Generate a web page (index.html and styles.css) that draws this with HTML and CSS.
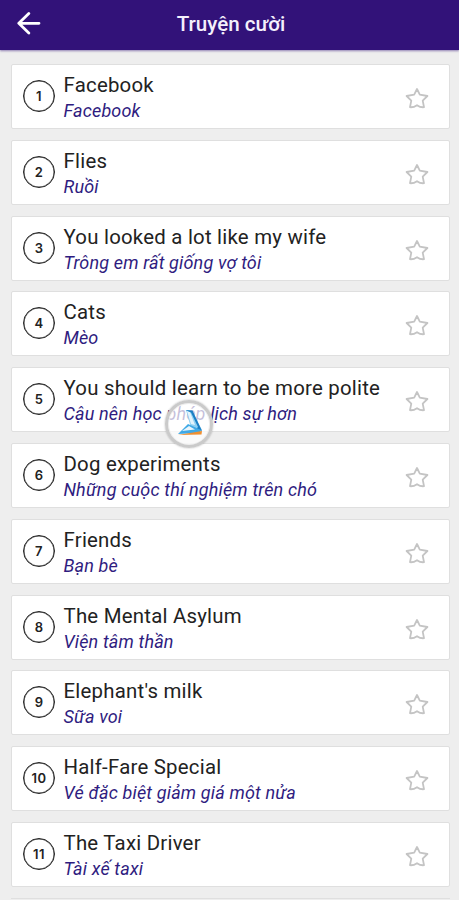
FILE: index.html
```html
<!DOCTYPE html>
<html lang="vi">
<head>
  <meta charset="UTF-8">
  <meta name="viewport" content="width=device-width, initial-scale=1.0">
  <title>Truyện cười</title>
  <link rel="stylesheet" href="styles.css">
</head>
<body>
  <svg class="symbols" width="0" height="0">
    <symbol id="star" viewBox="0 0 24 24">
      <path d="M12 3 L14.8 8.6 L22.4 10 L17.7 14.6 L19 21.2 Q15.5 21.6 12 19.2 Q8.5 21.6 5 21.2 L6.3 14.6 L1.6 10 L9.2 8.6 Z" fill="none" stroke="#c4c4c4" stroke-width="1.8" stroke-linejoin="round"/>
    </symbol>
  </svg>

  <header class="header">
    <a class="back" href="#" aria-label="Back">
      <svg width="24" height="24" viewBox="0 0 24 24" fill="none" stroke="#fff" stroke-width="2.8" stroke-linecap="round" stroke-linejoin="round">
        <path d="M22 12.3 H1.8 M11.8 2.5 L1.8 12.3 L11.8 22"/>
      </svg>
    </a>
    <h1>Truyện cười</h1>
  </header>

  <main class="list" id="list"></main>

  <div class="bubble">
    <svg width="48" height="48" viewBox="0 0 48 48">
      <path d="M21 10 L27 11 L37 30 L35 31 L26 28 Z" fill="#8fd0f2"/>
      <path d="M22 11 L25 12 L30 25 L26 24 Z" fill="#e4f4fc"/>
      <path d="M20.5 10 L27.5 10.5 L37 31 L31 29 L33 27 L26 12.5 Z" fill="#1b7fc4"/>
      <path d="M13 34 L23 24 L36 30 L35 33 Z" fill="#3fa9e6"/>
      <path d="M17 31 L24 26 L30 29.5 Z" fill="#e9f6fd"/>
      <path d="M13 35 L37 31 L36.5 34.5 Z" fill="#ef8f31"/>
    </svg>
  </div>

  <script>
    const stories = [
      ['Facebook', 'Facebook'],
      ['Flies', 'Ruồi'],
      ['You looked a lot like my wife', 'Trông em rất giống vợ tôi'],
      ['Cats', 'Mèo'],
      ['You should learn to be more polite', 'Cậu nên học phép lịch sự hơn'],
      ['Dog experiments', 'Những cuộc thí nghiệm trên chó'],
      ['Friends', 'Bạn bè'],
      ['The Mental Asylum', 'Viện tâm thần'],
      ["Elephant's milk", 'Sữa voi'],
      ['Half-Fare Special', 'Vé đặc biệt giảm giá một nửa'],
      ['The Taxi Driver', 'Tài xế taxi']
    ];

    const list = document.getElementById('list');
    stories.forEach(function(story, i) {
      list.innerHTML += `
        <div class="card">
          <div class="number">${i + 1}</div>
          <div class="text">
            <div class="title">${story[0]}</div>
            <div class="subtitle">${story[1]}</div>
          </div>
          <svg class="star" width="24" height="24"><use href="#star"/></svg>
        </div>`;
    });
    // next card, only its top edge is visible
    list.innerHTML += '<div class="card card-next"></div>';
  </script>
</body>
</html>
```
FILE: styles.css
```css
body {
  margin: 0;
  height: 900px;
  overflow: hidden;
  background-color: #eeeeee;
  font-family: Roboto, sans-serif;
}

.symbols {
  position: absolute;
}

.header {
  display: grid;
  grid-template-columns: 60px 1fr 60px;
  align-items: center;
  height: 50px;
  background-color: #321279;
  box-shadow: 0 1px 2px rgba(50, 18, 121, 0.5);
}

.back {
  display: flex;
  padding: 0 0 4px 17px;
}

.header h1 {
  margin: 0;
  padding-bottom: 3px;
  padding-left: 3px;
  color: #f4f0fc;
  font-size: 20.6px;
  font-weight: 500;
  line-height: 26px;
  text-align: center;
}

.list {
  display: flex;
  flex-direction: column;
  gap: 10.8px;
  padding: 14px 9px 0 11px;
}

.card {
  display: flex;
  flex-shrink: 0;
  align-items: center;
  box-sizing: border-box;
  height: 65px;
  padding: 0 20px 0 11px;
  background-color: #ffffff;
  border: 1px solid #dfdfdf;
  border-radius: 2px;
}

.card-next {
  height: 1px;
  border-bottom: none;
}

.number {
  display: flex;
  justify-content: center;
  align-items: center;
  box-sizing: border-box;
  width: 32px;
  height: 32px;
  margin: 0 8.5px 1px 0;
  border: 1px solid #222222;
  border-radius: 50%;
  box-shadow: inset 0 0 0 0.5px #444444;
  color: #222222;
  font-family: Inter, sans-serif;
  font-size: 13px;
  font-weight: 600;
  letter-spacing: 0.4px;
}

.text {
  flex: 1;
  padding-top: 3px;
  white-space: nowrap;
}

.title {
  color: #222222;
  font-size: 20.4px;
  line-height: 26px;
  letter-spacing: 0.23px;
}

.subtitle {
  color: #2f1c80;
  font-size: 18px;
  font-style: italic;
  line-height: 26px;
  letter-spacing: 0.16px;
}

.star {
  margin-top: 3px;
}

.bubble {
  position: absolute;
  top: 400px;
  left: 165px;
  box-sizing: border-box;
  width: 48px;
  height: 48px;
  border: 3px solid #cacaca;
  border-radius: 50%;
  background-color: rgba(255, 255, 255, 0.72);
  box-shadow: inset 0 0 0 1px #eeeeee, 0 0 2px rgba(0, 0, 0, 0.3);
}

.bubble svg {
  display: block;
  margin: -3px;
}
```
